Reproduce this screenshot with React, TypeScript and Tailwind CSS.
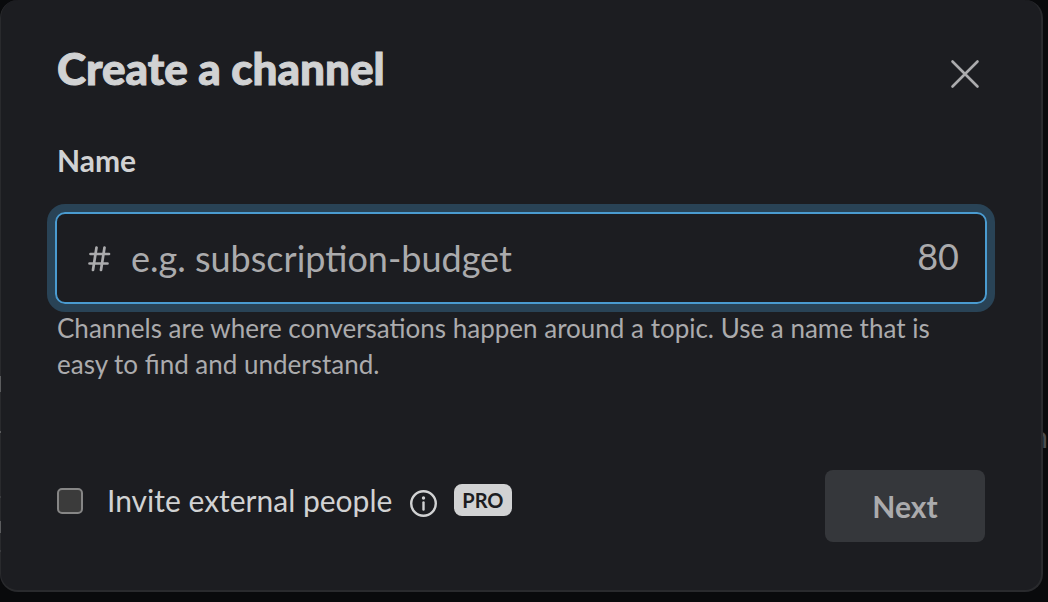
export default function App() {
  return (
    <div className="relative min-h-screen overflow-hidden bg-[#090a0c] pr-[5px] pb-2.5 font-['Lato',sans-serif] text-[#d1d2d3]">
      <div aria-hidden="true" className="absolute top-[418px] right-0 text-[30px] leading-9 text-[#4a4b4d]">n</div>
      <form
        role="dialog"
        aria-labelledby="title"
        className="relative flex min-h-[592px] flex-col rounded-[18px] border-r-2 border-b-2 border-l border-[#292a2d] bg-[#1c1d21] px-14 pt-[38px] pb-12"
      >
        <header className="flex items-center justify-between">
          <h1 id="title" className="text-[44px] leading-[60px] font-black [-webkit-text-stroke:1px_#d1d2d3]">Create a channel</h1>
          <button type="button" aria-label="Close" className="mt-3">
            <svg width="40" height="40" viewBox="0 0 40 40" fill="none" stroke="#ababad" strokeWidth="2.6" strokeLinecap="round">
              <path d="M7.5 7.5 32.5 32.5M32.5 7.5 7.5 32.5" />
            </svg>
          </button>
        </header>
        <label htmlFor="name" className="mt-10 text-[30px] leading-[44px] font-bold">Name</label>
        <div className="-mx-0.5 mt-[30px] flex h-[92px] items-center rounded-[10px] border-2 border-[#4a9bd0] pr-[26px] pl-[30px] text-[36px] text-[#ababad] ring-8 ring-[#294356]">
          <svg aria-hidden="true" width="24" height="28" viewBox="0 0 24 28" fill="none" stroke="#ababad" strokeWidth="2.7" strokeLinecap="round">
            <path d="M9.5 3.5 6 26M17.5 3.5 14 26M3.5 10H22M2.5 19.5H20.5" />
          </svg>
          <input id="name" placeholder="e.g. subscription-budget" className="ml-5 min-w-0 flex-1 bg-transparent outline-none placeholder:text-[#ababad]" />
          <span className="pb-1">80</span>
        </div>
        <p className="mt-1.5 text-[26px] leading-9 text-[#ababad]">
          Channels are where conversations happen around a topic. Use a name that is easy to find and understand.
        </p>
        <footer className="mt-auto flex items-start justify-between">
          <div className="flex h-[60px] items-center">
            <label className="flex items-center text-[30px]">
              <input type="checkbox" className="mt-0.5 mr-6 size-[26px] appearance-none rounded-[5px] border-2 border-[#868686] bg-[#3b3b3b]" />
              Invite external people
            </label>
            <button type="button" aria-label="About external people" className="mt-1.5 ml-4">
              <svg width="30" height="30" viewBox="0 0 30 30" fill="none" stroke="#d1d2d3" strokeWidth="2.4" strokeLinecap="round">
                <circle cx="15.5" cy="15.5" r="12.3" />
                <path d="M15.5 14.5v7" />
                <circle cx="15.5" cy="10" r="1.7" fill="#d1d2d3" stroke="none" />
              </svg>
            </button>
            <span className="ml-4 flex h-8 items-center rounded-lg bg-[#d1d2d3] px-2 text-[20px] font-bold text-[#1c1d21]">PRO</span>
          </div>
          <button type="button" className="h-[72px] w-40 rounded-lg bg-[#35373b] text-[30px] font-bold text-[#ababad]">Next</button>
        </footer>
      </form>
      <svg aria-hidden="true" className="absolute top-0 left-0" width="1" height="600" stroke="#5b5c5e" strokeWidth="1">
        <path d="M.5 376V392M.5 431V433M.5 521V533" />
        <path d="M.5 496V498M.5 550V552" stroke="#3b3c3f" />
      </svg>
    </div>
  );
}
